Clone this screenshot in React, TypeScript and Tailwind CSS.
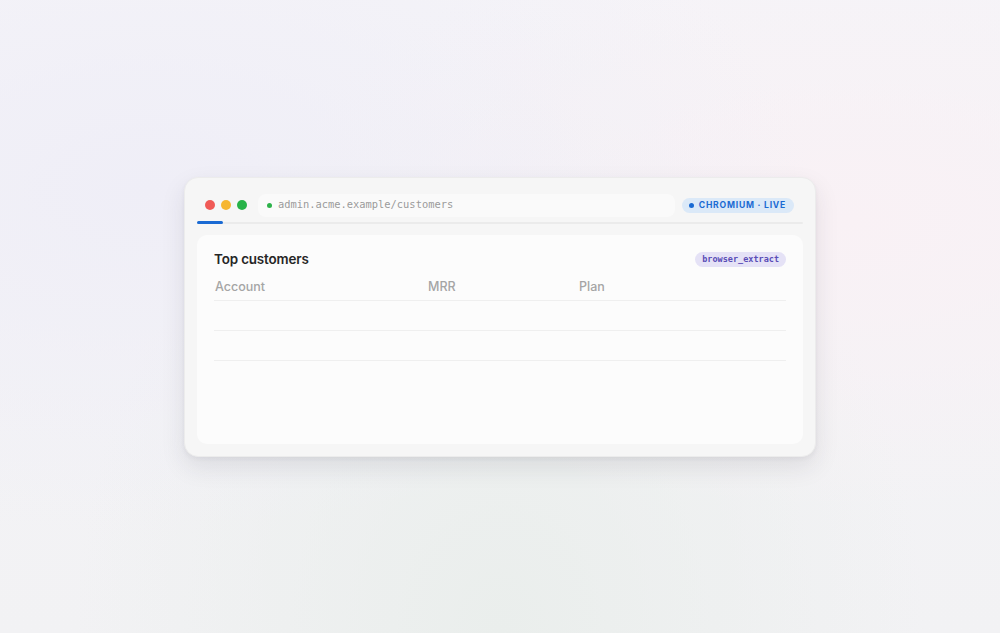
import React from "react";

const sans = { fontFamily: "Inter, 'Noto Sans', sans-serif" };
const mono = { fontFamily: "'DejaVu Sans Mono', 'Liberation Mono', monospace" };

export default function App() {
  return (
    <div
      className="w-full h-[633px] flex items-center justify-center bg-[radial-gradient(ellipse_at_15%_30%,#efeef7_0%,transparent_55%),radial-gradient(ellipse_at_85%_35%,#f9f1f5_0%,transparent_50%),radial-gradient(ellipse_at_50%_100%,#eaeeec_0%,transparent_60%),linear-gradient(180deg,#f5f4f8_0%,#f2f2f4_100%)]"
      style={sans}
    >
      <div className="w-[632px] h-[280px] rounded-[14px] bg-[#f6f6f6] border border-[#ececec] shadow-[0_10px_24px_rgba(40,40,60,0.10),0_2px_4px_rgba(40,40,60,0.05)] pt-[16px] px-[12px] pb-[12px] flex flex-col">
        {/* header */}
        <div className="h-[23px] flex items-center pl-[8px] pr-[9px]">
          <div className="flex items-center gap-[6px]">
            <span className="w-[10px] h-[10px] rounded-full bg-[#f05a56]" />
            <span className="w-[10px] h-[10px] rounded-full bg-[#f6b630]" />
            <span className="w-[10px] h-[10px] rounded-full bg-[#27b348]" />
          </div>
          <div className="ml-[11px] flex-1 h-[23px] rounded-[8px] bg-[#fafafa] flex items-center pl-[9px]">
            <span className="w-[5px] h-[5px] rounded-full bg-[#2db24a]" />
            <span className="ml-[6px] text-[10.4px] text-[#9b9b9b]" style={mono}>
              admin.acme.example/customers
            </span>
          </div>
          <div className="ml-[7px] h-[15px] rounded-full bg-[#dbe9f8] flex items-center pl-[7px] pr-[8px]">
            <span className="w-[5px] h-[5px] rounded-full bg-[#1a6ad3]" />
            <span className="ml-[5px] text-[8.6px] font-bold tracking-[0.09em] text-[#1a6ad3] leading-none">
              CHROMIUM · LIVE
            </span>
          </div>
        </div>
        {/* progress */}
        <div className="mt-[5px] h-[2px] bg-[#ebebeb] rounded-full">
          <div className="w-[26px] h-[3px] -mt-[0.5px] rounded-full bg-[#1a6ad3]" />
        </div>
        {/* panel */}
        <div className="mt-[11px] flex-1 rounded-[10px] bg-[#fcfcfc] px-[17px] pt-[17px]">
          <div className="h-[16px] flex items-center justify-between">
            <span className="text-[13.4px] font-semibold text-[#262626] tracking-[-0.01em]">Top customers</span>
            <span
              className="h-[15px] rounded-full bg-[#e5e2f6] px-[7px] flex items-center text-[8.5px] font-bold text-[#5a4db6]"
              style={mono}
            >
              browser_extract
            </span>
          </div>
          <div className="mt-[9px]">
            <div className="grid grid-cols-[213px_151px_1fr] h-[24px] items-start pt-[1px] border-b border-[#efefef] text-[12.5px] font-medium text-[#a5a5a5]">
              <span className="pl-[1px]">Account</span>
              <span className="pl-[1px]">MRR</span>
              <span className="pl-[1px]">Plan</span>
            </div>
            <div className="h-[30px] border-b border-[#efefef]" />
            <div className="h-[30px] border-b border-[#efefef]" />
          </div>
        </div>
      </div>
    </div>
  );
}
